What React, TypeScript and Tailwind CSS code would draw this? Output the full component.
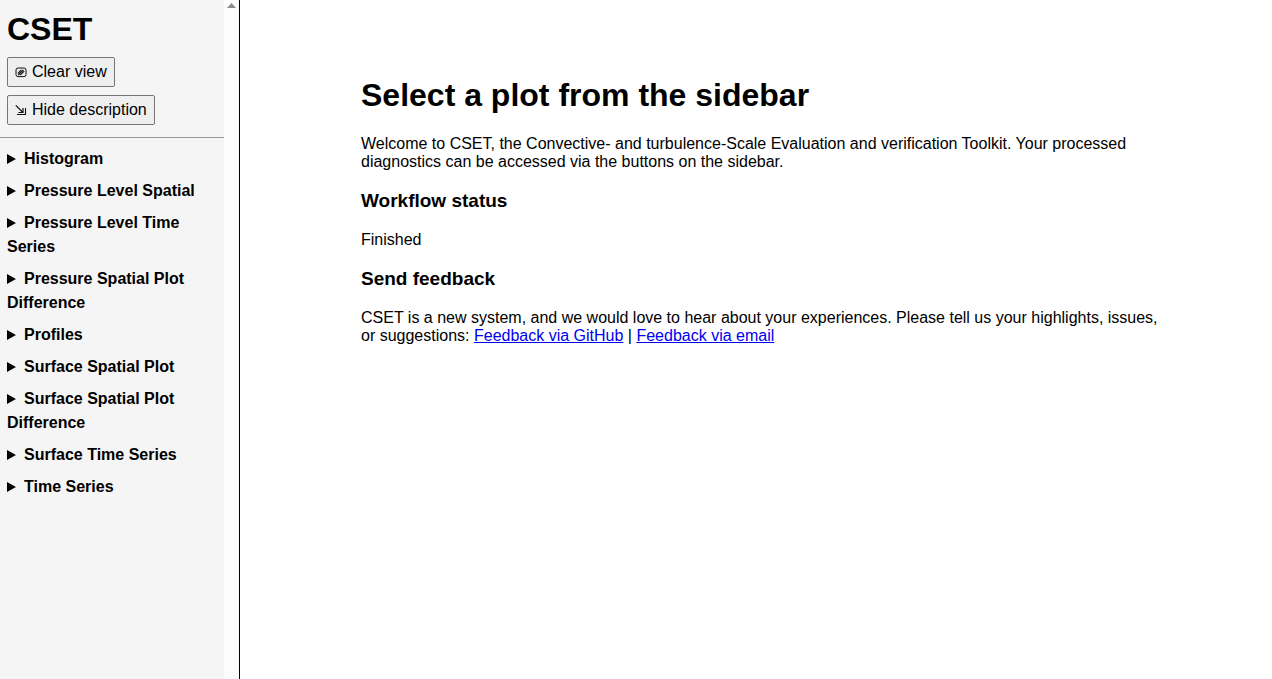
const categories = [
  "Histogram",
  "Pressure Level Spatial",
  "Pressure Level Time Series",
  "Pressure Spatial Plot Difference",
  "Profiles",
  "Surface Spatial Plot",
  "Surface Spatial Plot Difference",
  "Surface Time Series",
  "Time Series",
];

const buttonClass =
  "flex h-[30px] items-center gap-[5px] rounded-[2px] border border-[#767676] bg-[#efefef] px-[7px] text-base leading-[18px]";

function ClearIcon() {
  return (
    <svg className="h-3 w-3" viewBox="0 0 12 12" fill="none" stroke="#111" aria-hidden="true">
      <rect x="1" y="2" width="10" height="8.6" rx="2" strokeWidth="1" />
      <path d="M2.8 7.4 6.4 3.8M3.2 9 8.4 3.8M5.2 9.2 9.2 5.2" strokeWidth="1.1" />
    </svg>
  );
}

function CollapseIcon() {
  return (
    <svg className="h-3 w-3" viewBox="0 0 12 12" fill="none" stroke="#111" aria-hidden="true">
      <path d="M0.8 1.3 7.5 8M3.4 8.5H8V4" strokeWidth="1.2" />
      <path d="M2 10.5H10.5V4" strokeWidth="1.1" />
    </svg>
  );
}

function Sidebar() {
  return (
    <aside className="flex w-60 shrink-0 border-r border-black bg-[#f5f5f5]">
      <div className="min-w-0 flex-1">
        <header className="flex flex-col items-start gap-2 px-[7px] pt-[11px] pb-3">
          <h1 className="mb-[2px] text-[32px] leading-9 font-bold">CSET</h1>
          <button type="button" className={buttonClass}>
            <ClearIcon />
            Clear view
          </button>
          <button type="button" className={buttonClass}>
            <CollapseIcon />
            Hide description
          </button>
        </header>
        <hr className="border-[#9a9a9a]" />
        <nav className="flex flex-col gap-2 px-[7px] pt-[9px]" aria-label="Plots">
          {categories.map((name) => (
            <details key={name}>
              <summary className="block text-base leading-6 font-bold">
                <svg
                  className="mr-2 inline-block h-[10px] w-[9px] align-baseline"
                  viewBox="0 0 9 10"
                  aria-hidden="true"
                >
                  <path d="M0 0 9 5 0 10Z" />
                </svg>
                {name}
              </summary>
            </details>
          ))}
        </nav>
      </div>
      <div className="flex w-[15px] shrink-0 justify-center bg-[#fcfcfc] pt-[3px]" aria-hidden="true">
        <svg className="h-[5px] w-[9px]" viewBox="0 0 9 5" fill="#8b8b8b">
          <path d="M4.5 0 9 5H0Z" />
        </svg>
      </div>
    </aside>
  );
}

export default function App() {
  return (
    <div className="flex min-h-screen bg-white font-['Liberation_Sans',Arial,sans-serif] text-black">
      <Sidebar />
      <main className="min-w-0 flex-1 pt-[77px] pr-8 pl-[121px]">
        <div className="max-w-[800px] text-base leading-[18px]">
          <h1 className="mb-[22px] text-[32px] leading-9 font-bold">Select a plot from the sidebar</h1>
          <p>
            Welcome to CSET, the Convective- and turbulence-Scale Evaluation and verification Toolkit. Your
            processed diagnostics can be accessed via the buttons on the sidebar.
          </p>
          <h2 className="my-[19px] text-[19px] leading-[22px] font-bold">Workflow status</h2>
          <p>Finished</p>
          <h2 className="my-[19px] text-[19px] leading-[22px] font-bold">Send feedback</h2>
          <p>
            CSET is a new system, and we would love to hear about your experiences. Please tell us your
            highlights, issues, or suggestions:{" "}
            <a href="#github" className="text-[#0000ee] underline">
              Feedback via GitHub
            </a>{" "}
            |{" "}
            <a href="#email" className="text-[#0000ee] underline">
              Feedback via email
            </a>
          </p>
        </div>
      </main>
    </div>
  );
}
